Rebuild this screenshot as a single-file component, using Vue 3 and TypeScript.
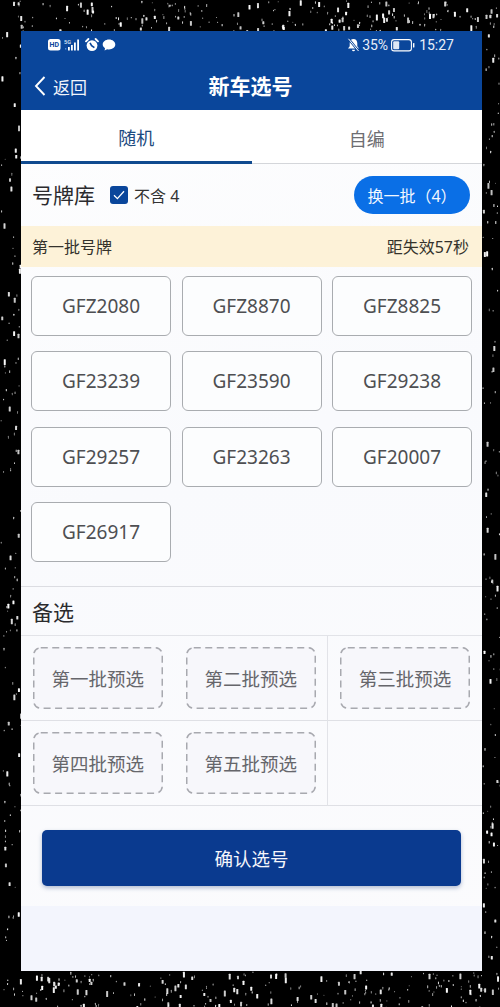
<script setup lang="ts">
const plates: string[] = ['GFZ2080','GFZ8870','GFZ8825','GF23239','GF23590','GF29238','GF29257','GF23263','GF20007','GF26917']
const picks: string[] = ['第一批预选','第二批预选','第三批预选','第四批预选','第五批预选','']

let seed = 20240
const rnd = (): number => {
  seed = (seed * 16807) % 2147483647
  return seed / 2147483647
}
interface Star { x: number; y: number; w: number; h: number; o: number }
const makeStars = (n: number, x0: number, x1: number, y0: number, y1: number): Star[] =>
  Array.from({ length: n }, () => {
    const big = rnd() > 0.72
    return {
      x: x0 + rnd() * (x1 - x0),
      y: y0 + rnd() * (y1 - y0),
      w: big ? 2 : 1,
      h: big ? 3 + rnd() * 3 : 1 + rnd() * 2,
      o: big ? 0.75 + rnd() * 0.25 : 0.45 + rnd() * 0.5,
    }
  })
const stars: Star[] = [
  ...makeStars(210, 0, 500, 0, 31),
  ...makeStars(120, 0, 21, 31, 971),
  ...makeStars(120, 482, 500, 31, 971),
  ...makeStars(230, 0, 500, 971, 1007),
]
</script>

<template>
  <div class="page">
    <svg class="stars" width="500" height="1007" viewBox="0 0 500 1007" aria-hidden="true">
      <rect v-for="(s, i) in stars" :key="i" :x="s.x" :y="s.y" :width="s.w" :height="s.h" :opacity="s.o" rx="0.5" fill="#fff" />
    </svg>

    <main class="phone">
      <header class="head">
        <div class="status">
          <div class="status-side">
            <svg class="ic" width="13" height="12" viewBox="0 0 13 12"><rect width="12.5" height="11.5" rx="2.5" fill="#fff" /><text x="6.2" y="8.4" class="hd">HD</text></svg>
            <svg class="ic" width="18" height="14" viewBox="0 0 18 14">
              <text x="0" y="5.5" class="fiveg">5G</text>
              <rect x="1" y="10" width="1.3" height="1.6" fill="#4d8fd8" />
              <rect x="4" y="9" width="1.8" height="3.5" fill="#fff" />
              <rect x="7" y="7" width="1.8" height="5.5" fill="#fff" />
              <rect x="10" y="4.5" width="1.8" height="8" fill="#fff" />
              <rect x="13.2" y="1.5" width="1.8" height="11" fill="#fff" />
            </svg>
            <svg class="ic" width="14" height="14" viewBox="0 0 14 14">
              <circle cx="7" cy="7.6" r="5.4" fill="#fff" />
              <path d="M1 3.4 3.4 1M13 3.4 10.6 1" stroke="#fff" stroke-width="1.8" stroke-linecap="round" />
              <path d="M5 4.8 6.6 7.6 9.4 9.6" stroke="#0a469b" stroke-width="1.6" fill="none" />
            </svg>
            <svg class="ic" width="14" height="12" viewBox="0 0 14 12"><path d="M7 .6c3.5 0 6.3 2.2 6.3 5S10.500 10.500 7 10.500c-.7 0-1.300-.1-1.900-.2L2.600 11.600l.4-2.400C1.500 8.300.7 7 .7 5.600.7 2.800 3.500.6 7 .6Z" fill="#fff" /></svg>
          </div>
          <div class="status-side right">
            <svg class="ic" width="13" height="14" viewBox="0 0 13 14">
              <path d="M6.500 1c2.500 0 3.800 2 3.800 4.300v3l1.700 2.200H1l1.700-2.200v-3C2.700 3 4 1 6.500 1ZM5 11.800h3a1.500 1.500 0 0 1-3 0Z" fill="#fff" />
              <path d="M1.500 .8 11.500 13" stroke="#0a469b" stroke-width="2.400" />
              <path d="M1.500 .8 11.500 13" stroke="#fff" stroke-width="1" />
            </svg>
            <span class="pct">35%</span>
            <svg class="ic batt" width="24" height="13" viewBox="0 0 24 13">
              <rect x=".6" y=".6" width="19.800" height="11.300" rx="2.500" fill="none" stroke="#fff" stroke-width="1.100" />
              <rect x="2.200" y="2.200" width="6" height="8" rx="1" fill="#dfe8f5" />
              <rect x="22" y="4" width="1.400" height="4.500" rx=".6" fill="#fff" />
            </svg>
            <span class="time">15:27</span>
          </div>
        </div>
        <div class="nav">
          <div class="back">
            <svg width="14" height="22" viewBox="0 0 14 22"><path d="M11.500 2 3 11l8.500 9" fill="none" stroke="#fff" stroke-width="1.900" /></svg>
            <span>返回</span>
          </div>
          <h1 class="title">新车选号</h1>
        </div>
      </header>

      <nav class="tabs">
        <div class="tab active">随机</div>
        <div class="tab">自编</div>
      </nav>

      <section class="lib">
        <div class="lib-left">
          <h2 class="sec-title">号牌库</h2>
          <span class="check">
            <svg width="12" height="10" viewBox="0 0 12 10"><path d="M1 5.200 4.400 8.600 11 1.200" fill="none" stroke="#fff" stroke-width="1.300" /></svg>
          </span>
          <span class="check-label">不含 4</span>
        </div>
        <button class="swap">换一批（4）</button>
      </section>

      <div class="banner">
        <span>第一批号牌</span>
        <span>距失效57秒</span>
      </div>

      <div class="plates">
        <div v-for="p in plates" :key="p" class="plate">{{ p }}</div>
      </div>

      <section class="backup">
        <h2 class="sec-title backup-title">备选</h2>
        <div class="picks">
          <div v-for="(p, i) in picks" :key="i" class="cell">
            <div v-if="p" class="dash">
              <svg class="dash-line" width="130" height="62" viewBox="0 0 130 62" aria-hidden="true">
                <rect x=".75" y=".75" width="128.500" height="60.500" rx="7" fill="none" stroke="#a8a9af" stroke-width="1.500" stroke-dasharray="7 4.500" />
              </svg>
              {{ p }}
            </div>
          </div>
        </div>
      </section>

      <div class="confirm-wrap">
        <button class="confirm">确认选号</button>
      </div>
      <div class="foot"></div>
    </main>
  </div>
</template>

<style>
html, body { margin: 0; background: #000; }
</style>

<style scoped>
.page {
  position: relative;
  width: 500px;
  height: 1007px;
  box-sizing: border-box;
  padding: 31px 18px 36px 21px;
  background: #000;
  overflow: hidden;
  font-family: "Noto Sans", "Noto Sans CJK SC", sans-serif;
}
.stars { position: absolute; inset: 0; }
.phone {
  position: relative;
  height: 940px;
  display: flex;
  flex-direction: column;
  background: linear-gradient(160deg, #fefefe 0%, #f9fafd 45%, #fbfbfd 100%);
}
.head { height: 79px; box-sizing: border-box; background: #0a469b; color: #fff; }
.status {
  height: 28px;
  padding: 0 28px 0 27px;
  box-sizing: border-box;
  display: flex;
  justify-content: space-between;
  align-items: center;
}
.status-side { display: flex; align-items: center; gap: 3px; }
.status-side.right { gap: 2px; }
.ic { display: block; flex: none; }
.hd { font: 700 7px Roboto, sans-serif; fill: #0a469b; text-anchor: middle; }
.fiveg { font: 600 5.500px Roboto, sans-serif; fill: #d5e2f3; }
.pct, .time { font-family: Roboto, sans-serif; font-size: 14px; line-height: 16px; color: #e8eff9; }
.batt { margin-left: 1px; }
.time { margin-left: 2px; }
.nav {
  position: relative;
  height: 51px;
  box-sizing: border-box;
  padding: 3px 2px 0 0;
  display: flex;
  align-items: center;
  justify-content: center;
}
.back {
  position: absolute;
  left: 12px;
  top: 7px;
  height: 40px;
  display: flex;
  align-items: center;
  gap: 6px;
  font-size: 17px;
  color: #f0f4fb;
}
.title { margin: 0; font-size: 21px; font-weight: 700; line-height: 28px; }
.tabs {
  height: 54px;
  display: flex;
  box-sizing: border-box;
  border-bottom: 1px solid #d4d6da;
  background: #fff;
}
.tab {
  flex: 1;
  display: flex;
  align-items: center;
  justify-content: center;
  font-size: 18px;
  color: #6e6e72;
  padding-top: 3px;
  box-sizing: border-box;
}
.tab.active {
  color: #1c4a80;
  height: 54px;
  border-bottom: 3px solid #0f4a8f;
}
.lib {
  height: 62px;
  box-sizing: border-box;
  padding: 0 12px 0 11px;
  display: flex;
  align-items: center;
  justify-content: space-between;
}
.lib-left { display: flex; align-items: center; margin-top: -1px; }
.sec-title { margin: 0; font-size: 21px; font-weight: 400; color: #2b2b2e; line-height: 28px; }
.check {
  width: 18px;
  height: 18px;
  margin-left: 15px;
  margin-top: 1px;
  border-radius: 3px;
  background: #0a469b;
  display: flex;
  align-items: center;
  justify-content: center;
}
.check-label { margin-left: 6px; font-size: 16px; color: #333; }
.swap {
  width: 116px;
  height: 38px;
  border: 0;
  padding: 0;
  border-radius: 19px;
  background: #0a6fe6;
  color: #f2f7ff;
  font: inherit;
  font-size: 16px;
}
.banner {
  height: 41px;
  box-sizing: border-box;
  padding: 0 13px 2px 11px;
  display: flex;
  align-items: center;
  justify-content: space-between;
  background: #fdf2d8;
  font-size: 16px;
  color: #34322c;
}
.plates {
  padding: 9px 10px 0 10px;
  display: grid;
  grid-template-columns: repeat(3, 140px);
  column-gap: 10.500px;
  row-gap: 15.400px;
  height: 320px;
  box-sizing: border-box;
  align-content: start;
  border-bottom: 1px solid #dcdde2;
}
.plate {
  height: 60px;
  box-sizing: border-box;
  border: 1px solid #a9acb0;
  border-radius: 6px;
  background: #fcfdfe;
  display: flex;
  align-items: center;
  justify-content: center;
  font-size: 19px;
  color: #4e4f52;
}
.backup { display: flex; flex-direction: column; }
.backup-title {
  height: 49px;
  line-height: 50px;
  padding-left: 11px;
  box-sizing: border-box;
  border-bottom: 1px solid #e2e3e8;
}
.picks { display: grid; grid-template-columns: 153.500px 153.500px 1fr; }
.cell {
  height: 85px;
  box-sizing: border-box;
  border-bottom: 1px solid #dfe0e5;
  display: flex;
  justify-content: center;
  align-items: center;
}
.cell:nth-child(3n+2) { border-right: 1px solid #e2e3e8; }
.dash {
  position: relative;
  width: 130px;
  height: 62px;
  margin-top: -1px;
  box-sizing: border-box;
  border-radius: 7px;
  background: #f7f7fb;
  display: flex;
  align-items: center;
  justify-content: center;
  font-size: 18.500px;
  color: #66666b;
}
.dash-line { position: absolute; inset: 0; }
.confirm-wrap { padding: 24px 21px 20px; }
.confirm {
  display: block;
  width: 100%;
  height: 56px;
  border: 0;
  border-radius: 5px;
  background: #0a3a8f;
  color: #f4f6fb;
  font: inherit;
  font-size: 18.500px;
  box-shadow: 0 2px 4px rgba(40, 70, 130, 0.35);
}
.foot { flex: 1; background: #f3f5fd; }
</style>
